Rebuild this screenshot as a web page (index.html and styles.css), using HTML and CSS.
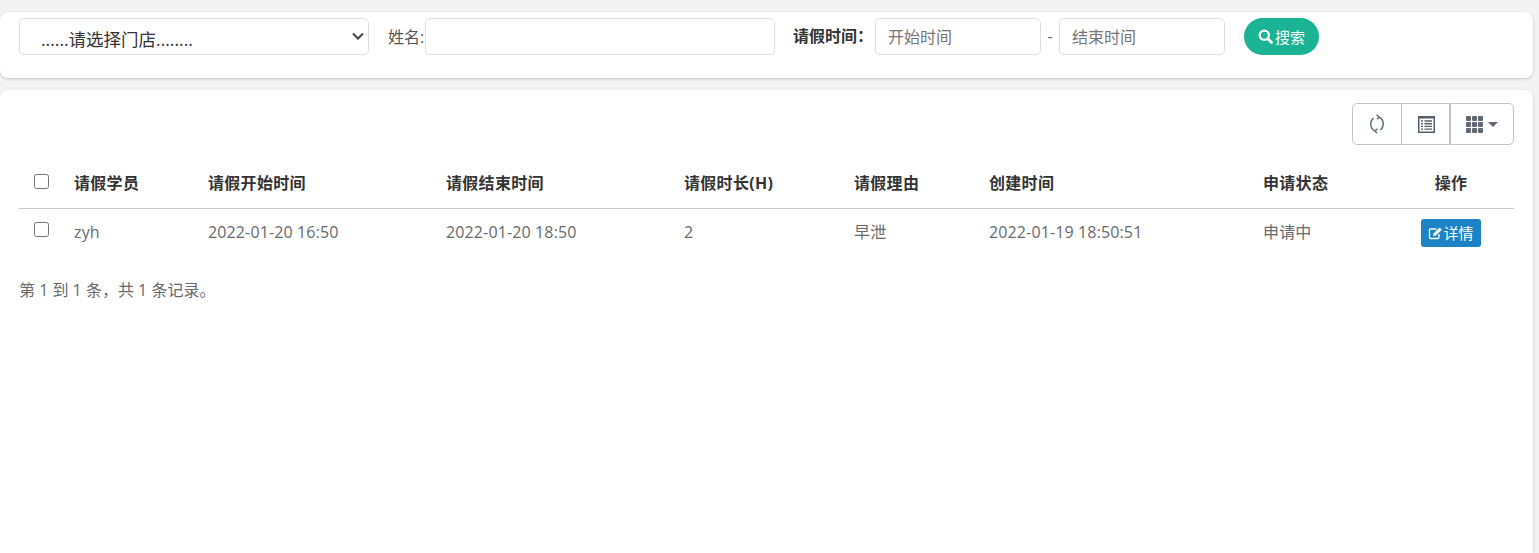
FILE: index.html
```html
<!DOCTYPE html>
<html lang="zh-CN">
<head>
<meta charset="utf-8">
<title>请假记录</title>
<link rel="stylesheet" href="styles.css">
</head>
<body>
<div class="page">
  <form class="card search-card">
    <select class="control store-select">
      <option>......请选择门店........</option>
    </select>
    <label class="name-label">姓名:</label>
    <input class="control name-input" type="text">
    <label class="time-label">请假时间：</label>
    <input class="control date-input" type="text" placeholder="开始时间">
    <span class="dash">-</span>
    <input class="control date-input" type="text" placeholder="结束时间">
    <button class="search-btn" type="button">
      <svg class="search-icon" viewBox="0 0 15 15" width="15" height="15"><circle cx="6.300" cy="6.300" r="4.600" fill="none" stroke="#fff" stroke-width="2.300"/><path d="M9.800 9.800l3.700 3.700" stroke="#fff" stroke-width="2.800" stroke-linecap="round"/></svg>搜索
    </button>
  </form>
  <div class="card table-card">
    <div class="toolbar">
      <button class="tool-btn refresh" type="button">
        <svg viewBox="0 0 18 20" width="18" height="20" fill="none" stroke="#67727c" stroke-width="1.500"><path d="M5.600 4.200A7.600 7.600 0 0 0 7 17"/><path d="M12.400 15.800A7.600 7.600 0 0 0 11 3"/><path d="M8.500 0.800L11 3L9 5.300"/><path d="M9.500 14.700L7 17L9 19.200"/></svg>
      </button>
      <button class="tool-btn list" type="button">
        <svg viewBox="0 0 17 17" width="17" height="17"><path d="M0 0h17v17H0z" fill="#56606a"/><path d="M1.500 2.500h14v13h-14z" fill="#fff"/><path d="M3 5h2M6.500 5h7.500M3 7.700h2M6.500 7.700h7.500M3 10.400h2M6.500 10.400h7.500M3 13.100h2M6.500 13.100h7.500" stroke="#56606a" stroke-width="1.400"/></svg>
      </button>
      <button class="tool-btn columns" type="button">
        <svg viewBox="0 0 17 17" width="17" height="17" fill="#5f6873"><rect x="0" y="0" width="5" height="5" rx="1"/><rect x="6" y="0" width="5" height="5" rx="1"/><rect x="12" y="0" width="5" height="5" rx="1"/><rect x="0" y="6" width="5" height="5" rx="1"/><rect x="6" y="6" width="5" height="5" rx="1"/><rect x="12" y="6" width="5" height="5" rx="1"/><rect x="0" y="12" width="5" height="5" rx="1"/><rect x="6" y="12" width="5" height="5" rx="1"/><rect x="12" y="12" width="5" height="5" rx="1"/></svg>
        <span class="caret"></span>
      </button>
    </div>
    <table class="data-table">
      <colgroup>
        <col class="c-check"><col class="c-student"><col class="c-time"><col class="c-time"><col class="c-hours"><col class="c-reason"><col class="c-created"><col class="c-status"><col class="c-action">
      </colgroup>
      <thead>
        <tr>
          <th class="check-cell"><input class="check" type="checkbox"></th>
          <th>请假学员</th>
          <th>请假开始时间</th>
          <th>请假结束时间</th>
          <th>请假时长(H)</th>
          <th>请假理由</th>
          <th>创建时间</th>
          <th>申请状态</th>
          <th class="center">操作</th>
        </tr>
      </thead>
      <tbody>
        <tr>
          <td class="check-cell"><input class="check" type="checkbox"></td>
          <td>zyh</td>
          <td>2022-01-20 16:50</td>
          <td>2022-01-20 18:50</td>
          <td>2</td>
          <td>早泄</td>
          <td>2022-01-19 18:50:51</td>
          <td>申请中</td>
          <td class="center action-cell"><a class="detail-btn"><svg viewBox="0 0 15 14" width="15" height="14" fill="none"><path d="M11 8v3.500a1 1 0 0 1-1 1H2.500a1 1 0 0 1-1-1V4a1 1 0 0 1 1-1h6" stroke="#fff" stroke-width="1.300"/><path d="M5.200 10l.5-2.700L11.600 1.500l2.200 2.200-5.900 5.800z" fill="#fff"/></svg>详情</a></td>
        </tr>
      </tbody>
    </table>
    <p class="summary">第 1 到 1 条，共 1 条记录。</p>
  </div>
</div>
</body>
</html>
```
FILE: styles.css
```css
* { box-sizing: border-box; }
html, body { margin: 0; height: 100%; }
body {
  background: #f3f3f4;
  color: #676a6c;
  font: 16px/20px "Open Sans", "Noto Sans CJK SC", sans-serif;
  overflow: hidden;
}
.page {
  display: flex;
  flex-direction: column;
  gap: 12px;
  width: 1533px;
  height: 553px;
  padding-top: 12px;
}
.card {
  background: #fff;
  border-radius: 8px;
  box-shadow: 0 1px 3px rgba(0, 0, 0, .2);
}
.search-card {
  display: flex;
  align-items: flex-start;
  height: 66px;
  padding: 6px 19px;
}
.control {
  height: 37px;
  border: 1px solid #dedede;
  border-radius: 5px;
  background: #fff;
  font: inherit;
  color: #333;
  outline: none;
}
.control::placeholder { color: #757575; opacity: 1; }
.store-select {
  width: 350px;
  padding: 4px 0 0 21px;
  font-size: 17.500px;
  appearance: none;
  background: #fff url("data:image/svg+xml,%3Csvg xmlns='http://www.w3.org/2000/svg' width='12' height='8'%3E%3Cpath d='M1 1.500l5 5 5-5' fill='none' stroke='%23444' stroke-width='2'/%3E%3C/svg%3E") no-repeat 332px 13px;
}
.name-label { width: 37px; margin: 9px 0 0 19px; color: #555; white-space: nowrap; }
.name-input { width: 350px; }
.time-label { margin: 8px 0 0 18px; width: 82px; font-weight: 700; color: #333; white-space: nowrap; }
.date-input { width: 166px; padding: 0 12px; }
.dash { width: 18px; margin-top: 8px; text-align: center; }
.search-btn {
  display: flex;
  align-items: center;
  justify-content: center;
  gap: 2px;
  width: 75px;
  height: 37px;
  margin-left: 19px;
  padding: 0;
  border: 0;
  border-radius: 19px;
  background: #1ab394;
  color: #fff;
  font: inherit;
  font-size: 15px;
}
.table-card {
  flex: 1;
  padding: 13px 19px 0;
  border-radius: 8px 8px 0 0;
}
.toolbar {
  display: flex;
  justify-content: flex-end;
  height: 42px;
}
.tool-btn {
  display: flex;
  align-items: center;
  justify-content: center;
  gap: 5px;
  height: 42px;
  padding: 0;
  border: 1px solid #c2c2c2;
  background: #fff;
}
.refresh { width: 50px; border-radius: 5px 0 0 5px; }
.list { width: 49px; margin-left: -1px; padding-left: 1px; }
.columns { width: 64px; border-radius: 0 5px 5px 0; }
.caret {
  border-top: 5px solid #5f6873;
  border-left: 5px solid transparent;
  border-right: 5px solid transparent;
}
.data-table {
  width: 1495px;
  margin-top: 15px;
  border-collapse: collapse;
  table-layout: fixed;
}
.c-check { width: 46px; }
.c-student { width: 134px; }
.c-time { width: 238px; }
.c-hours { width: 170px; }
.c-reason { width: 135px; }
.c-created { width: 274px; }
.c-status { width: 134px; }
.c-action { width: 126px; }
th, td { padding: 0 9px; text-align: left; }
th {
  height: 48px;
  padding-bottom: 2px;
  border-bottom: 1px solid #c8c8c8;
  color: #333;
  font-weight: 700;
  letter-spacing: .3px;
}
td { height: 47px; letter-spacing: .13px; }
.center { text-align: center; }
.check-cell { padding: 0 2px 0 0; text-align: center; }
.check { width: 15px; height: 15px; margin: 0 0 6px; }
.action-cell { padding-top: 2px; }
.detail-btn {
  display: inline-flex;
  align-items: center;
  justify-content: center;
  width: 60px;
  height: 28px;
  border-radius: 3px;
  background: #1c84c6;
  color: #fff;
  font-size: 15px;
  letter-spacing: 0;
  vertical-align: middle;
}
.summary { margin: 25px 0 0; }
```
